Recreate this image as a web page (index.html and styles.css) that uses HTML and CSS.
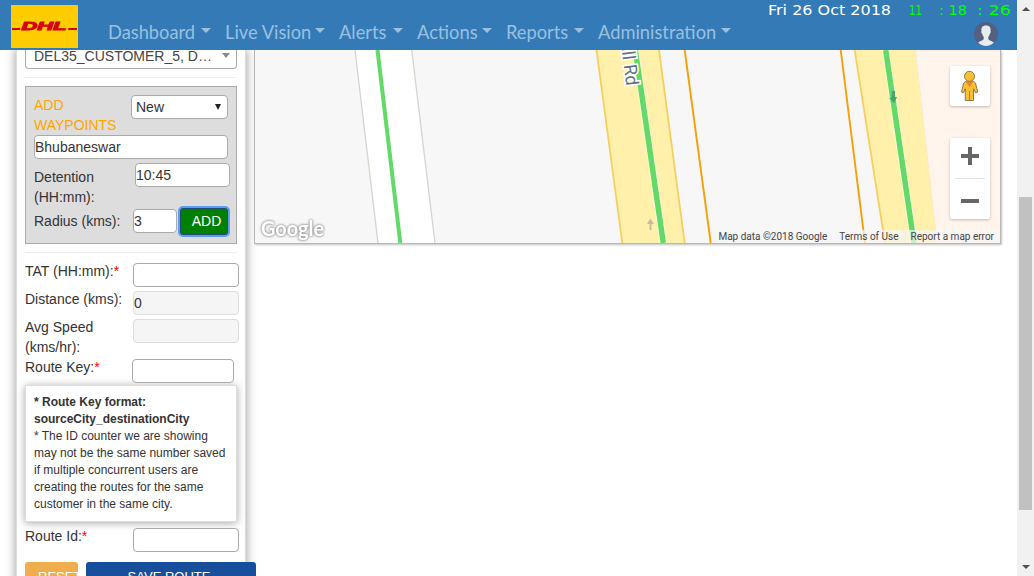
FILE: index.html
```html
<!DOCTYPE html>
<html lang="en">
<head>
<meta charset="utf-8">
<title>Create Route</title>
<link rel="stylesheet" href="styles.css">
</head>
<body>
<div class="page">
  <header class="topbar">
    <svg class="logo" width="67" height="43" viewBox="0 0 67 43">
      <rect width="67" height="43" fill="#fc0"/>
      <path d="M1 23h8.500l-.7 2H1zM57.500 23H66v2h-9z" fill="#d40511"/>
      <text class="logo-text" x="10.500" y="24.600" textLength="45" lengthAdjust="spacingAndGlyphs">DHL</text>
    </svg>
    <nav class="menu">
      <a class="menu-item dashboard">Dashboard</a>
      <a class="menu-item live">Live Vision</a>
      <a class="menu-item alerts">Alerts</a>
      <a class="menu-item actions">Actions</a>
      <a class="menu-item reports">Reports</a>
      <a class="menu-item admin">Administration</a>
    </nav>
    <div class="status">
      <svg class="clock" width="248" height="20" viewBox="0 0 248 20">
        <text x="0" y="15" textLength="123" lengthAdjust="spacingAndGlyphs" fill="#fff">Fri 26 Oct 2018</text>
        <g fill="#0f0">
          <text x="141" y="15" textLength="13" lengthAdjust="spacingAndGlyphs">11</text>
          <text x="171" y="15" textLength="28" lengthAdjust="spacingAndGlyphs">: 18</text>
          <text x="209" y="15" textLength="34" lengthAdjust="spacingAndGlyphs">: 26</text>
        </g>
      </svg>
      <svg class="avatar" width="24" height="24" viewBox="0 0 24 24">
        <circle cx="12" cy="12" r="12" fill="#556080"/>
        <path d="M12 3.500c-3.600 0-5 2.200-4.500 5.500-.7.800 0 2.500.7 2.800.3 1.500.9 2.500 1.500 3v2.500c-.8 1.500-3.300 1.300-5.600 3.300C6.200 22.700 9 24 12 24s5.800-1.300 7.900-3.400c-2.300-2-4.800-1.800-5.600-3.300v-2.500c.6-.5 1.200-1.500 1.500-3 .7-.3 1.400-2 .7-2.800.5-3.300-.9-5.500-4.500-5.500z" fill="#e7eced"/>
      </svg>
    </div>
  </header>

  <main class="content">
    <section class="panel">
      <div class="customer"><span>DEL35_CUSTOMER_5, D…</span><i class="arrow"></i></div>
      <div class="rule"></div>
      <div class="waypoints">
        <div class="way-head">
          <span class="way-title">ADD WAYPOINTS</span>
          <div class="field select"><span>New</span><i class="arrow dark"></i></div>
        </div>
        <div class="field city">Bhubaneswar</div>
        <div class="way-row detention">
          <label>Detention (HH:mm):</label>
          <div class="field">10:45</div>
        </div>
        <div class="way-row radius">
          <label>Radius (kms):</label>
          <div class="field">3</div>
          <button class="add">ADD</button>
        </div>
      </div>
      <div class="rule"></div>
      <div class="rows">
        <div class="row"><label>TAT (HH:mm):<b>*</b></label><div class="field"></div></div>
        <div class="row"><label>Distance (kms):</label><div class="field off">0</div></div>
        <div class="row tall"><label>Avg Speed (kms/hr):</label><div class="field off"></div></div>
        <div class="row key"><label>Route Key:<b>*</b></label><div class="field"></div></div>
      </div>
      <div class="note"><strong>* Route Key format:<br>sourceCity_destinationCity</strong><br>* The ID counter we are showing<br>may not be the same number saved<br>if multiple concurrent users are<br>creating the routes for the same<br>customer in the same city.</div>
      <div class="row route-id"><label>Route Id:<b>*</b></label><div class="field"></div></div>
      <div class="buttons">
        <button class="reset">RESET</button>
        <button class="save">SAVE ROUTE</button>
      </div>
    </section>

    <section class="map">
      <svg class="roads" width="745" height="193" viewBox="255 50 745 193">
        <rect x="254" y="50" width="748" height="195" fill="#f7f7f7"/>
        <path d="M915.300 50H1002V244H937z" fill="#fff5ec" stroke="#fbe3d3"/>
        <path d="M355 50H411.700L435 243H378z" fill="#fff"/>
        <path d="M355 50L378 243M411.700 50L435 243" stroke="#d8d3cc" stroke-width="1.300"/>
        <path d="M377.500 50L400.300 243" stroke="#63da67" stroke-width="4"/>
        <path d="M596.500 50H659L684.700 243H622.300z" fill="#fff0ac"/>
        <path d="M596.500 50L622.300 243M659 50L684.700 243" stroke="#f7cf60" stroke-width="1.800"/>
        <path d="M635.300 50L663.300 243" stroke="#fffbe5" stroke-width="7"/>
        <path d="M635.300 50L663.300 243" stroke="#63da67" stroke-width="5.500"/>
        <path d="M684.700 50L710.700 243M840.700 50L865 243" stroke="#f59f0a" stroke-width="1.900"/>
        <path d="M854.700 50H915.300L937 243H885z" fill="#fff0ac"/>
        <path d="M854.700 50L885 243" stroke="#f7cf60" stroke-width="1.800"/>
        <path d="M885.700 50L914 243" stroke="#fffbe5" stroke-width="7"/>
        <path d="M885.700 50L914 243" stroke="#63da67" stroke-width="5.500"/>
        <path d="M892 91h3v6h2l-3 6-5-5h2.500z" fill="#49a36b"/>
        <path d="M649.500 230v-6h-2.500l3.400-5.500 3.600 5.500h-2.500v6z" fill="#c5bda0"/>
        <text class="street" transform="translate(621.500 47.500) rotate(83)">ill Rd</text>
        <text class="google" x="261" y="236" textLength="63" lengthAdjust="spacingAndGlyphs">Google</text>
      </svg>
      <div class="controls">
        <div class="card">
          <svg width="40" height="40" viewBox="0 0 40 40">
            <path d="M16 15h7l2.500 2 2.200 9-2.200.8-2-4V34.500h-8.200V22.800l-1.800 4-2-.8 2.200-9z" fill="#fbbf30" stroke="#8c7a55"/>
            <path d="M19.500 25v9" stroke="#a68133"/>
            <path d="M15.500 15.500h8L19.500 21z" fill="#e9842b"/>
            <circle cx="19.500" cy="10.300" r="5" fill="#fbbf30" stroke="#8c7a55"/>
          </svg>
        </div>
        <div class="card">
          <svg width="40" height="81" viewBox="0 0 40 81">
            <path d="M11 18h18M20 9v18M11 63h18" stroke="#666" stroke-width="4"/>
            <path d="M5 40.500h30" stroke="#e3e3e3"/>
          </svg>
        </div>
      </div>
      <div class="credits"><span>Map data ©2018 Google</span><span>Terms of Use</span><span>Report a map error</span></div>
    </section>
  </main>
</div>
<div class="scrollbar">
  <i class="up"></i>
  <i class="thumb"></i>
  <i class="down"></i>
</div>
</body>
</html>
```

FILE: styles.css
```css
* { box-sizing: border-box; }
body {
  margin: 0;
  width: 1034px;
  height: 576px;
  overflow: hidden;
  display: flex;
  background: #fff;
  color: #333;
  font: 14px/20px "Liberation Sans", Arial, sans-serif;
}
.page { width: 1017px; height: 576px; overflow: hidden; }

.topbar {
  height: 50px;
  padding-left: 11px;
  background: #337ab7;
  display: flex;
  position: relative;
  z-index: 2;
}
.logo { margin-top: 5px; flex: none; }
.logo-text { font: italic bold 11px "Liberation Sans", Arial, sans-serif; fill: #d40511; stroke: #d40511; stroke-width: .9; }
.menu { display: flex; padding: 20px 0 0 30px; width: 690px; flex: none; }
.menu-item {
  display: flex;
  justify-content: space-between;
  flex: none;
  margin-right: 14px;
  color: #9ac0e0;
  font: 18.300px/24px Lato, sans-serif;
  white-space: nowrap;
}
.menu-item::after {
  content: "";
  margin-top: 8px;
  border: 5px solid transparent;
  border-top-color: #9ac0e0;
  border-bottom: 0;
}
.dashboard { width: 103px; }
.live { width: 100px; }
.alerts { width: 64px; }
.actions { width: 75px; }
.reports { width: 78px; }
.admin { width: 133px; }
.status { display: flex; flex-direction: column; width: 249px; flex: none; }
.clock { display: block; font: 14.500px "DejaVu Sans", sans-serif; }
.avatar { margin: 2px 0 0 206px; }

.content { display: flex; height: 526px; align-items: flex-start; }
.panel {
  width: 230px;
  height: 540px;
  margin-left: 16px;
  padding: 0 8px;
  flex: none;
  border: solid #ddd;
  border-width: 0 1px;
  box-shadow: 0 0 9px 1px rgba(0, 0, 0, .35);
}
.customer {
  display: flex;
  justify-content: space-between;
  width: 212px;
  height: 19px;
  padding: 0 6px 0 8px;
  border: 1px solid #aaa;
  border-top: 0;
  border-radius: 0 0 4px 4px;
  line-height: 13px;
  color: #444;
}
.arrow { margin-top: 3px; height: 5px; border: 4px solid transparent; border-top: 5px solid #888; border-bottom: 0; }
.arrow.dark { margin-top: 8px; border-width: 6px 3px 0; border-top-color: #222; height: 6px; }
.rule { width: 212px; height: 1px; margin: 8px 0; background: #eee; }
.waypoints {
  width: 212px;
  height: 158px;
  padding: 8px;
  background: #ddd;
  border: 1px solid #a9a9a9;
}
.way-head, .way-row, .row { display: flex; align-items: flex-start; }
.way-head { height: 40px; }
.way-title { width: 97px; color: orange; flex: none; }
.field {
  height: 24px;
  padding-left: 0;
  flex: none;
  background: #fff;
  border: 1px solid #aaa;
  border-radius: 4px;
  line-height: 22px;
}
.select { display: flex; justify-content: space-between; width: 97px; padding: 0 6px 0 4px; }
.city { width: 194px; }
.detention { margin-top: 4px; height: 44px; }
.detention label { width: 101px; padding-top: 4px; flex: none; }
.detention .field { width: 95px; }
.radius label { width: 99px; padding-top: 4px; flex: none; white-space: nowrap; }
.radius .field { width: 44px; margin-top: 2px; }
.add {
  width: 48px;
  height: 27px;
  margin: 1px 0 0 3px;
  padding: 0 0 2px 5px;
  flex: none;
  background: green;
  color: #fff;
  border: 1px solid #204d74;
  border-radius: 3px;
  box-shadow: 0 0 0 2px #5f9cf5;
  font: 14px "Liberation Sans", Arial, sans-serif;
}
.row { height: 28px; }
.row label { width: 108px; flex: none; }
.row b { color: red; font-weight: 400; }
.row .field { width: 106px; margin-top: 2px; }
.row .off { background: #f5f5f5; border-color: #ddd; }
.tall { height: 40px; }
.tall label { padding-right: 30px; }
.key label { width: 107px; }
.key .field { width: 102px; }
.note {
  width: 212px;
  height: 137px;
  padding: 8px;
  border: 1px solid #ddd;
  background: #fff;
  box-shadow: 0 1px 8px rgba(0, 0, 0, .35);
  font-size: 12px;
  line-height: 17px;
  white-space: nowrap;
}
.route-id { margin-top: 4px; height: 36px; }
.buttons { display: flex; gap: 8px; width: 231px; }
.buttons button {
  height: 32px;
  border: 0;
  border-radius: 3px;
  color: #fff;
  font: 13px/28px "Liberation Sans", Arial, sans-serif;
  overflow: hidden;
  flex: none;
}
.buttons .reset { width: 53px; padding: 0 0 2px 13px; background: #f0ad4e; text-align: left; }
.buttons .save { width: 170px; padding: 0 4px 2px 0; background: #184f9c; }

.map {
  position: relative;
  width: 747px;
  height: 194px;
  margin-left: 8px;
  border: 1px solid #b7b7b7;
  border-top: 0;
  box-shadow: 1px 1px 2px rgba(0, 0, 0, .25);
}
.roads { display: block; }
.street { font: 18px Roboto, sans-serif; fill: #5d7184; stroke: #fff; stroke-width: 3px; paint-order: stroke; }
.google { font: bold 20px Lato, sans-serif; fill: #fff; filter: drop-shadow(0 0 1px #888) drop-shadow(0 0 1px #bbb); }
.controls { position: absolute; right: 10px; top: 16px; display: flex; flex-direction: column; gap: 32px; }
.card { background: #fff; border-radius: 2px; box-shadow: 0 1px 3px rgba(0, 0, 0, .25); }
.card svg { display: block; }
.credits {
  position: absolute;
  right: 0;
  bottom: 0;
  display: flex;
  gap: 1px;
  color: #444;
  font: 10px/13px Roboto, sans-serif;
}
.credits span { padding: 0 6px 0 5px; background: rgba(245, 245, 245, .7); white-space: nowrap; }

.scrollbar {
  display: flex;
  flex-direction: column;
  align-items: center;
  width: 17px;
  height: 576px;
  padding: 7px 0 6px;
  background: #f1f1f1;
}
.up, .down { border: 4px solid transparent; }
.up { border-top: 0; border-bottom-color: #505050; }
.thumb { width: 13px; height: 313px; margin-top: 186px; background: #c1c1c1; }
.down { margin-top: 55px; border-bottom: 0; border-top-color: #505050; }
```
